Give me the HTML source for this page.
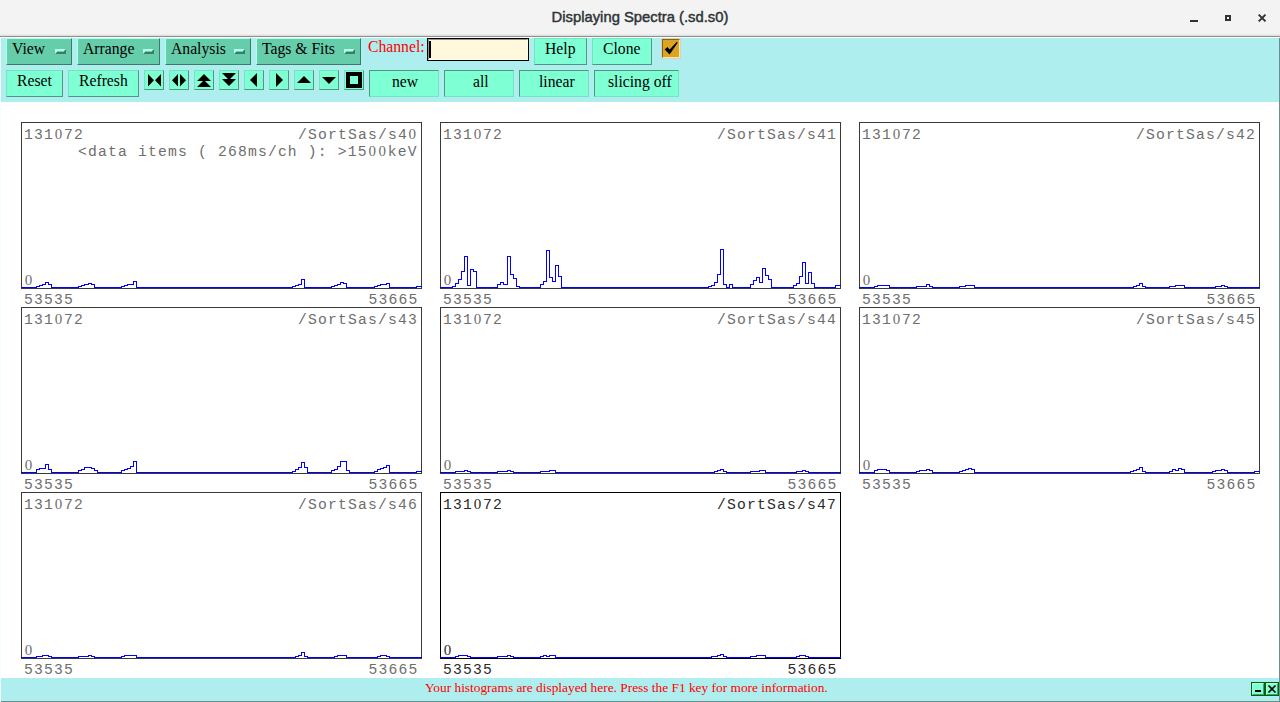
<!DOCTYPE html>
<html><head><meta charset="utf-8">
<style>
*{margin:0;padding:0;box-sizing:border-box}
html,body{width:1280px;height:702px;overflow:hidden;background:#fff;position:relative}
.a{position:absolute}
#title{left:0;top:0;width:1280px;height:37px;background:#f3f3f3}
#tline{left:0;top:36px;width:1280px;height:1px;background:#8f8e8a}
#tgrad{left:0;top:34px;width:1280px;height:2px;background:linear-gradient(#eaeae9 50%,#e0e0de 50%)}
#ttext{left:0;top:-0.9px;width:1280px;height:36px;text-align:center;font:14.8px "Liberation Sans",sans-serif;line-height:36px;color:#2e3436;-webkit-text-stroke:0.45px #2e3436}
.tb{background:#afeeee}
.mb{background:#66cdaa;border-style:solid;border-width:1px;border-color:#b2ffee #3d7b66 #3d7b66 #b2ffee;font:15.5px "Liberation Serif",serif;color:#000}
.bt{background:#7fffd4;border-style:solid;border-width:1px;border-color:#72e5bf #4c997f #4c997f #72e5bf;font:15.5px "Liberation Serif",serif;color:#000}
.sk{background:#7fffd4;border-style:solid;border-width:1px;border-color:#4c997f #72e5bf #72e5bf #4c997f;font:15.5px "Liberation Serif",serif;color:#000}
.txt{position:absolute;white-space:pre;line-height:1}
.ind{position:absolute;width:11px;height:5px;border-style:solid;border-width:2px;border-color:#b2ffee #3d7b66 #3d7b66 #b2ffee;background:#66cdaa}
.hf{position:absolute;width:401px;height:167px;border:1px solid #333}
.mono{position:absolute;white-space:pre;font:14.7px "Liberation Mono",monospace;letter-spacing:1.18px;color:#555;line-height:1}
.mono i{font-style:normal;font-family:"Liberation Serif",serif;font-size:15px;line-height:0;margin-left:0.66px;letter-spacing:1.84px}
</style></head><body>
<div id="title" class="a"></div>
<div id="tgrad" class="a"></div>
<div id="tline" class="a"></div>
<div id="ttext" class="a">Displaying Spectra (.sd.s0)</div>
<!-- window controls -->
<div class="a" style="left:1190px;top:20px;width:8px;height:2px;background:#2e3436"></div>
<div class="a" style="left:1225px;top:15px;width:6px;height:6px;border:2px solid #2e3436"></div>
<svg class="a" style="left:1256px;top:12px" width="12" height="12"><path d="M2.7 2.6L9.5 9.4M9.5 2.6L2.7 9.4" stroke="#2e3436" stroke-width="2" fill="none"/></svg>

<!-- frame -->
<div class="a" style="left:0;top:37px;width:1280px;height:1px;background:#f5ffff"></div>
<div class="a" style="left:0;top:37px;width:1px;height:665px;background:#f5ffff"></div>
<div class="a" style="left:1279px;top:38px;width:1px;height:664px;background:#698f8f"></div>
<div class="a" style="left:1px;top:701px;width:1279px;height:1px;background:#698f8f"></div>
<div class="a tb" style="left:1px;top:38px;width:1278px;height:64px"></div>
<div class="a tb" style="left:1px;top:678px;width:1278px;height:23px"></div>

<!-- menubuttons -->
<div class="a mb" style="left:6px;top:38px;width:66px;height:27px"><div class="ind" style="left:48px;top:10px"></div></div>
<div class="a mb" style="left:77px;top:38px;width:83px;height:27px"><div class="ind" style="left:65px;top:10px"></div></div>
<div class="a mb" style="left:165px;top:38px;width:86px;height:27px"><div class="ind" style="left:68px;top:10px"></div></div>
<div class="a mb" style="left:256px;top:38px;width:105px;height:27px"><div class="ind" style="left:87px;top:10px"></div></div>
<div class="txt" style="left:12px;top:38.7px;font:16.5px 'Liberation Serif',serif;transform:scaleX(0.95);transform-origin:0 0">View</div>
<div class="txt" style="left:83px;top:38.7px;font:16.5px 'Liberation Serif',serif;transform:scaleX(0.95);transform-origin:0 0">Arrange</div>
<div class="txt" style="left:171px;top:38.7px;font:16.5px 'Liberation Serif',serif;transform:scaleX(0.95);transform-origin:0 0">Analysis</div>
<div class="txt" style="left:262px;top:38.7px;font:16.5px 'Liberation Serif',serif;transform:scaleX(0.95);transform-origin:0 0">Tags &amp; Fits</div>

<div class="txt" style="left:368px;top:36.7px;font:16.5px 'Liberation Serif',serif;transform:scaleX(0.95);transform-origin:0 0;color:#f00">Channel:</div>
<div class="a" style="left:427px;top:38px;width:102px;height:23px;border:1px solid #000;background:#fff8dc"><div class="a" style="left:0;top:0;width:100px;height:21px;border-style:solid;border-width:1px;border-color:#999584 #fffce8 #fffce8 #999584"></div></div>
<div class="a" style="left:429px;top:41px;width:2px;height:17px;background:#000"></div>
<div class="a bt" style="left:534px;top:38px;width:53px;height:27px"></div>
<div class="a bt" style="left:592px;top:38px;width:60px;height:27px"></div>
<div class="txt" style="left:545px;top:38.7px;font:16.5px 'Liberation Serif',serif;transform:scaleX(0.95);transform-origin:0 0">Help</div>
<div class="txt" style="left:603px;top:38.7px;font:16.5px 'Liberation Serif',serif;transform:scaleX(0.95);transform-origin:0 0">Clone</div>
<!-- checkbox -->
<div class="a" style="left:661px;top:38px;width:20px;height:21px;background:#d8d0c8"></div>
<div class="a" style="left:662px;top:39px;width:18px;height:19px;border-style:solid;border-width:1px;border-color:#84630f #ffe79f #ffe79f #84630f;background:#daa520"></div>

<!-- row 2 -->
<div class="a bt" style="left:6px;top:70px;width:57px;height:27px"></div>
<div class="a bt" style="left:68px;top:70px;width:71px;height:27px"></div>
<div class="txt" style="left:17px;top:71.2px;font:16.5px 'Liberation Serif',serif;transform:scaleX(0.95);transform-origin:0 0">Reset</div>
<div class="txt" style="left:79px;top:71.2px;font:16.5px 'Liberation Serif',serif;transform:scaleX(0.95);transform-origin:0 0">Refresh</div>
<div class="a bt" style="left:144px;top:70px;width:20px;height:20px"></div>
<div class="a bt" style="left:169px;top:70px;width:20px;height:20px"></div>
<div class="a bt" style="left:194px;top:70px;width:20px;height:20px"></div>
<div class="a bt" style="left:219px;top:70px;width:20px;height:20px"></div>
<div class="a bt" style="left:244px;top:70px;width:20px;height:20px"></div>
<div class="a bt" style="left:269px;top:70px;width:20px;height:20px"></div>
<div class="a bt" style="left:294px;top:70px;width:20px;height:20px"></div>
<div class="a bt" style="left:319px;top:70px;width:20px;height:20px"></div>
<div class="a bt" style="left:344px;top:70px;width:20px;height:20px"></div>
<svg class="a" style="left:0;top:0" width="1280" height="110">
<g fill="#000">
<path d="M148 74V86.5L154 80.25Z M161 74V86.5L155 80.25Z"/>
<path d="M178 74V86.5L172 80.25Z M180 74V86.5L186 80.25Z"/>
<path d="M204 74L197 81H211Z M204 80L197 87H211Z"/>
<path d="M222 73H236L229 80Z M222 79H236L229 86Z"/>
<path d="M257 73V87L250 80Z"/>
<path d="M276 73V87L283 80Z"/>
<path d="M304 76L297 83H311Z"/>
<path d="M322 77H336L329 84Z"/>
<path d="M346 72H362V88H346Z M350 76V84H358V76Z" fill-rule="evenodd"/>
<path d="M664.6 49.6L667.4 46.9L669.7 49.6L676.9 41.7L677.7 42.7L669.6 54.6Z"/>
</g></svg>
<div class="a sk" style="left:369px;top:70px;width:70px;height:27px"></div>
<div class="a sk" style="left:444px;top:70px;width:70px;height:27px"></div>
<div class="a sk" style="left:519px;top:70px;width:70px;height:27px"></div>
<div class="a sk" style="left:594px;top:70px;width:85px;height:27px"></div>
<div class="txt" style="left:392px;top:72.2px;font:16.5px 'Liberation Serif',serif;transform:scaleX(0.95);transform-origin:0 0">new</div>
<div class="txt" style="left:473px;top:72.2px;font:16.5px 'Liberation Serif',serif;transform:scaleX(0.95);transform-origin:0 0">all</div>
<div class="txt" style="left:538.5px;top:72.2px;font:16.5px 'Liberation Serif',serif;transform:scaleX(0.95);transform-origin:0 0">linear</div>
<div class="txt" style="left:607.5px;top:72.2px;font:16.5px 'Liberation Serif',serif;transform:scaleX(0.95);transform-origin:0 0">slicing off</div>

<!-- status -->
<div class="a" style="left:1251px;top:682px;width:14px;height:14px;border:1px solid #006400;background:#7fffd4"><div class="a" style="left:0;top:0;width:12px;height:12px;border-style:solid;border-width:1px;border-color:#b2ffe8 #4c997f #4c997f #b2ffe8"></div></div>
<div class="a" style="left:1265px;top:682px;width:14px;height:14px;border:1px solid #006400;background:#7fffd4"><div class="a" style="left:0;top:0;width:12px;height:12px;border-style:solid;border-width:1px;border-color:#b2ffe8 #4c997f #4c997f #b2ffe8"></div></div>
<div class="a" style="left:1255px;top:690px;width:6px;height:2px;background:#000"></div>
<svg class="a" style="left:1266px;top:683px" width="12" height="12"><path d="M2.5 2.5L9.5 9.5M9.5 2.5L2.5 9.5" stroke="#000" stroke-width="1.6" fill="none"/></svg>
<div class="txt" style="left:425px;top:679.7px;font:13.36px 'Liberation Serif',serif;color:#f00">Your histograms are displayed here. Press the F1 key for more information.</div>

<!-- histograms -->
<div class="hf" style="left:21px;top:122px;border-color:#3a3a3a"></div>
<div class="mono" style="left:24px;top:128px;color:#6e6e6e">131<i>0</i>72</div>
<div class="mono" style="left:298px;top:128px;color:#6e6e6e">/SortSas/s4<i>0</i></div>
<div class="mono" style="left:78px;top:145px;color:#6e6e6e">&lt;data items ( 268ms/ch ): &gt;15<i>0</i><i>0</i>keV</div>
<div class="mono" style="left:24px;top:274px;color:#6e6e6e"><i>0</i></div>
<div class="mono" style="left:24px;top:293px;color:#6e6e6e">53535</div>
<div class="mono" style="left:368.5px;top:293px;color:#6e6e6e">53665</div>
<div class="hf" style="left:440px;top:122px;border-color:#3a3a3a"></div>
<div class="mono" style="left:443px;top:128px;color:#6e6e6e">131<i>0</i>72</div>
<div class="mono" style="left:717px;top:128px;color:#6e6e6e">/SortSas/s41</div>
<div class="mono" style="left:443px;top:274px;color:#6e6e6e"><i>0</i></div>
<div class="mono" style="left:443px;top:293px;color:#6e6e6e">53535</div>
<div class="mono" style="left:787.5px;top:293px;color:#6e6e6e">53665</div>
<div class="hf" style="left:859px;top:122px;border-color:#3a3a3a"></div>
<div class="mono" style="left:862px;top:128px;color:#6e6e6e">131<i>0</i>72</div>
<div class="mono" style="left:1136px;top:128px;color:#6e6e6e">/SortSas/s42</div>
<div class="mono" style="left:862px;top:274px;color:#6e6e6e"><i>0</i></div>
<div class="mono" style="left:862px;top:293px;color:#6e6e6e">53535</div>
<div class="mono" style="left:1206.5px;top:293px;color:#6e6e6e">53665</div>
<div class="hf" style="left:21px;top:307px;border-color:#3a3a3a"></div>
<div class="mono" style="left:24px;top:313px;color:#6e6e6e">131<i>0</i>72</div>
<div class="mono" style="left:298px;top:313px;color:#6e6e6e">/SortSas/s43</div>
<div class="mono" style="left:24px;top:459px;color:#6e6e6e"><i>0</i></div>
<div class="mono" style="left:24px;top:478px;color:#6e6e6e">53535</div>
<div class="mono" style="left:368.5px;top:478px;color:#6e6e6e">53665</div>
<div class="hf" style="left:440px;top:307px;border-color:#3a3a3a"></div>
<div class="mono" style="left:443px;top:313px;color:#6e6e6e">131<i>0</i>72</div>
<div class="mono" style="left:717px;top:313px;color:#6e6e6e">/SortSas/s44</div>
<div class="mono" style="left:443px;top:459px;color:#6e6e6e"><i>0</i></div>
<div class="mono" style="left:443px;top:478px;color:#6e6e6e">53535</div>
<div class="mono" style="left:787.5px;top:478px;color:#6e6e6e">53665</div>
<div class="hf" style="left:859px;top:307px;border-color:#3a3a3a"></div>
<div class="mono" style="left:862px;top:313px;color:#6e6e6e">131<i>0</i>72</div>
<div class="mono" style="left:1136px;top:313px;color:#6e6e6e">/SortSas/s45</div>
<div class="mono" style="left:862px;top:459px;color:#6e6e6e"><i>0</i></div>
<div class="mono" style="left:862px;top:478px;color:#6e6e6e">53535</div>
<div class="mono" style="left:1206.5px;top:478px;color:#6e6e6e">53665</div>
<div class="hf" style="left:21px;top:492px;border-color:#3a3a3a"></div>
<div class="mono" style="left:24px;top:498px;color:#6e6e6e">131<i>0</i>72</div>
<div class="mono" style="left:298px;top:498px;color:#6e6e6e">/SortSas/s46</div>
<div class="mono" style="left:24px;top:644px;color:#6e6e6e"><i>0</i></div>
<div class="mono" style="left:24px;top:663px;color:#6e6e6e">53535</div>
<div class="mono" style="left:368.5px;top:663px;color:#6e6e6e">53665</div>
<div class="hf" style="left:440px;top:492px;border-color:#000"></div>
<div class="mono" style="left:443px;top:498px;color:#2a2a2a">131<i>0</i>72</div>
<div class="mono" style="left:717px;top:498px;color:#2a2a2a">/SortSas/s47</div>
<div class="mono" style="left:443px;top:644px;color:#2a2a2a"><i>0</i></div>
<div class="mono" style="left:443px;top:663px;color:#2a2a2a">53535</div>
<div class="mono" style="left:787.5px;top:663px;color:#2a2a2a">53665</div>
<svg class="a" style="left:0;top:0" width="1280" height="702" shape-rendering="crispEdges"><path d="M21.5 287.5H36.5V286.5H39.5V285.5H42.5V284.5H45.5V282.5H48.5V284.5H51.5V287.5H78.5V286.5H81.5V285.5H84.5V284.5H88.5V283.5H91.5V284.5H94.5V287.5H121.5V286.5H124.5V285.5H127.5V284.5H133.5V281.5H136.5V287.5H292.5V286.5H295.5V285.5H298.5V284.5H301.5V279.5H304.5V287.5H331.5V286.5H334.5V285.5H337.5V284.5H340.5V282.5H343.5V283.5H346.5V287.5H374.5V286.5H377.5V285.5H380.5V284.5H386.5V283.5H389.5V287.5H416.5V286.5H421 M440.5 287.5H452.5V286.5H455.5V283.5H458.5V279.5H461.5V271.5H464.5V256.5H467.5V285.5H470.5V269.5H473.5V271.5H476.5V287.5H497.5V284.5H500.5V282.5H503.5V284.5H507.5V256.5H510.5V274.5H513.5V278.5H516.5V286.5H519.5V287.5H540.5V284.5H543.5V281.5H546.5V250.5H549.5V277.5H552.5V281.5H555.5V265.5H558.5V276.5H561.5V287.5H708.5V286.5H711.5V285.5H714.5V282.5H717.5V274.5H720.5V249.5H723.5V284.5H726.5V287.5H729.5V284.5H732.5V287.5H750.5V284.5H753.5V280.5H756.5V277.5H759.5V282.5H762.5V268.5H765.5V275.5H768.5V279.5H771.5V287.5H793.5V285.5H796.5V283.5H799.5V276.5H802.5V262.5H805.5V283.5H808.5V272.5H811.5V283.5H814.5V287.5H835.5V285.5H840 M859.5 287.5H874.5V286.5H877.5V285.5H889.5V287.5H916.5V286.5H926.5V284.5H929.5V286.5H932.5V287.5H959.5V286.5H965.5V285.5H974.5V287.5H1133.5V286.5H1136.5V285.5H1139.5V283.5H1142.5V286.5H1145.5V287.5H1169.5V286.5H1175.5V285.5H1184.5V287.5H1215.5V286.5H1221.5V285.5H1224.5V286.5H1227.5V287.5H1259 M21.5 472.5H36.5V469.5H39.5V468.5H45.5V464.5H48.5V469.5H51.5V472.5H78.5V470.5H81.5V469.5H84.5V467.5H91.5V468.5H94.5V470.5H97.5V472.5H121.5V470.5H124.5V469.5H127.5V468.5H130.5V466.5H133.5V461.5H136.5V472.5H292.5V471.5H295.5V469.5H298.5V467.5H301.5V462.5H304.5V467.5H307.5V472.5H331.5V470.5H334.5V469.5H337.5V466.5H340.5V461.5H346.5V470.5H349.5V472.5H374.5V471.5H377.5V469.5H380.5V468.5H383.5V467.5H386.5V465.5H389.5V472.5H416.5V471.5H421 M440.5 472.5H455.5V471.5H464.5V470.5H467.5V471.5H470.5V472.5H497.5V471.5H507.5V470.5H510.5V471.5H513.5V472.5H540.5V471.5H549.5V470.5H555.5V472.5H714.5V471.5H717.5V470.5H720.5V469.5H723.5V471.5H726.5V472.5H750.5V471.5H759.5V470.5H765.5V472.5H796.5V471.5H802.5V470.5H805.5V471.5H808.5V472.5H840 M859.5 472.5H874.5V470.5H877.5V469.5H886.5V470.5H889.5V472.5H916.5V471.5H919.5V470.5H926.5V469.5H929.5V470.5H932.5V472.5H959.5V471.5H962.5V470.5H965.5V469.5H968.5V468.5H971.5V469.5H974.5V472.5H1130.5V471.5H1133.5V470.5H1136.5V469.5H1139.5V467.5H1142.5V471.5H1145.5V472.5H1169.5V471.5H1172.5V469.5H1175.5V470.5H1178.5V468.5H1181.5V469.5H1184.5V472.5H1212.5V471.5H1215.5V470.5H1221.5V469.5H1224.5V470.5H1227.5V472.5H1254.5V471.5H1259 M21.5 657.5H36.5V656.5H42.5V655.5H48.5V656.5H51.5V657.5H78.5V656.5H88.5V655.5H91.5V656.5H94.5V657.5H121.5V656.5H124.5V655.5H136.5V657.5H295.5V656.5H298.5V655.5H301.5V652.5H304.5V656.5H307.5V657.5H334.5V656.5H337.5V655.5H346.5V657.5H377.5V656.5H380.5V655.5H386.5V656.5H389.5V657.5H421 M440.5 657.5H455.5V656.5H458.5V655.5H467.5V656.5H470.5V657.5H497.5V656.5H507.5V655.5H510.5V656.5H513.5V657.5H540.5V656.5H543.5V655.5H546.5V656.5H549.5V655.5H555.5V657.5H711.5V656.5H717.5V655.5H720.5V654.5H723.5V656.5H726.5V657.5H750.5V656.5H756.5V655.5H765.5V657.5H796.5V656.5H799.5V655.5H805.5V656.5H808.5V657.5H840" stroke="#0000ff" stroke-width="1" fill="none" stroke-linecap="square"/></svg>
</body></html>
